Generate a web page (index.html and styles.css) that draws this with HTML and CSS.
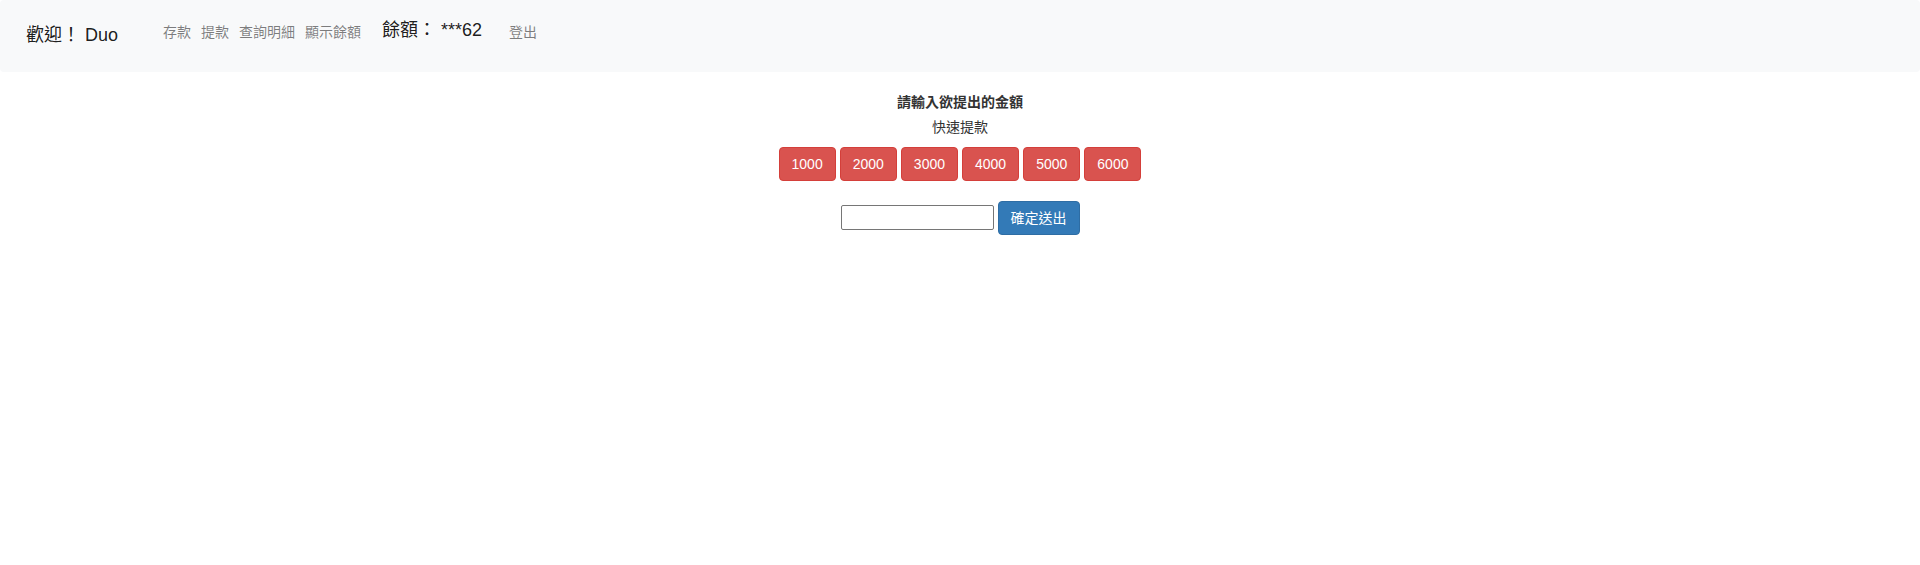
FILE: index.html
```html
<!DOCTYPE html>
<html lang="zh-Hant">
<head>
<meta charset="utf-8">
<title>提款</title>
<link rel="stylesheet" href="styles.css">
</head>
<body>
<nav class="navbar">
  <a class="brand">歡迎！ Duo</a>
  <ul class="links">
    <li><a class="link">存款</a></li>
    <li><a class="link">提款</a></li>
    <li><a class="link">查詢明細</a></li>
    <li><a class="link">顯示餘額</a></li>
  </ul>
  <span class="balance">餘額： ***62</span>
  <a class="link logout">登出</a>
</nav>
<main class="content">
  <h4 class="title">請輸入欲提出的金額</h4>
  <p class="subtitle">快速提款</p>
  <div class="quick">
    <button class="btn btn-danger">1000</button>
    <button class="btn btn-danger">2000</button>
    <button class="btn btn-danger">3000</button>
    <button class="btn btn-danger">4000</button>
    <button class="btn btn-danger">5000</button>
    <button class="btn btn-danger">6000</button>
  </div>
  <form class="form">
    <input class="amount" type="text">
    <button class="btn btn-primary" type="button">確定送出</button>
  </form>
</main>
</body>
</html>
```
FILE: styles.css
```css
html, body {
  margin: 0;
  padding: 0;
  background: #fff;
}
body {
  font-family: "Liberation Sans", "Noto Sans CJK TC", sans-serif;
  font-size: 14px;
  line-height: 20px;
  color: #333;
}
.navbar {
  display: flex;
  align-items: flex-start;
  height: 72px;
  box-sizing: border-box;
  padding: 17px 0 0 26px;
  background: #f8f9fa;
  border-radius: 4px;
}
.brand {
  margin-top: 5px;
  font-size: 18px;
  line-height: 27px;
  color: rgba(0, 0, 0, 0.9);
  margin-right: 45px;
}
.links {
  display: flex;
  gap: 10px;
  list-style: none;
  margin: 5px 0 0 0;
  padding: 0;
}
.link {
  font-size: 14px;
  line-height: 20px;
  color: rgba(0, 0, 0, 0.5);
}
.balance {
  margin-left: 21px;
  font-size: 18px;
  line-height: 27px;
  color: rgba(0, 0, 0, 0.9);
}
.logout {
  margin-left: 27px;
  margin-top: 5px;
}
.content {
  display: flex;
  flex-direction: column;
  align-items: center;
  padding-top: 20px;
}
.title {
  margin: 0 0 5px 0;
  font-size: 14px;
  line-height: 20px;
  font-weight: bold;
  color: #333;
}
.subtitle {
  margin: 0;
  font-size: 14px;
  line-height: 20px;
  color: #333;
}
.quick {
  display: flex;
  gap: 4px;
  margin-top: 10px;
}
.btn {
  font-family: "Liberation Sans", "Noto Sans CJK TC", sans-serif;
  font-size: 14px;
  line-height: 20px;
  padding: 6px 12px;
  border: 1px solid transparent;
  border-radius: 4px;
  color: #fff;
  cursor: pointer;
  margin: 0;
}
.btn-danger {
  background: #d9534f;
  border-color: #d43f3a;
}
.btn-primary {
  background: #337ab7;
  border-color: #2e6da4;
}
.form {
  display: flex;
  align-items: center;
  gap: 4px;
  margin: 20px 0 0 0;
}
.amount {
  width: 153px;
  height: 25px;
  box-sizing: border-box;
  border: 1px solid #767676;
  border-radius: 2px;
  padding: 1px 2px;
  margin: 0 0 2px 0;
  font-size: 13px;
}
```
